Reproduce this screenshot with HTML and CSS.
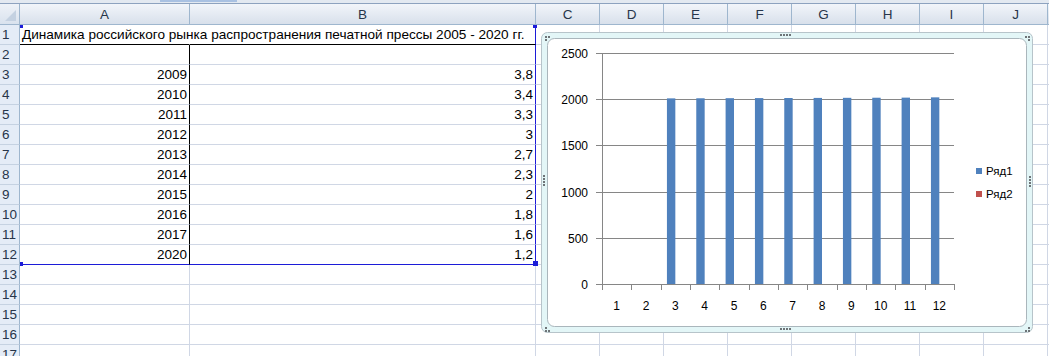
FILE: index.html
```html
<!DOCTYPE html>

<html>
    <head>
        <meta charset="utf-8">
        <title>Книга1 - Microsoft Excel</title>
        <link rel="stylesheet" href="styles.css">
    </head>

    <body>
        <div class="ribbon-edge"><span class="ribbon-tab"></span></div>

        <div class="sheet">
            <div class="grid" id="grid"></div>

            <span class="range-dot dot-tl"></span>
            <span class="range-dot dot-tr"></span>
            <span class="range-dot dot-bl"></span>
            <span class="range-dot dot-br"></span>

            <div class="chart">
                <svg width="493" height="302" viewBox="541 33 493 302" id="chart">
                    <rect class="frame-outer" x="541.5" y="33.5" width="491" height="300" rx="6"></rect>
                    <rect class="frame-inner" x="547.5" y="39.5" width="479" height="288" rx="7"></rect>

                    <g class="handle">
                        <rect x="780" y="35" width="2" height="2"></rect>
                        <rect x="783" y="35" width="2" height="2"></rect>
                        <rect x="786" y="35" width="2" height="2"></rect>
                        <rect x="789" y="35" width="2" height="2"></rect>
                        <rect x="780" y="329" width="2" height="2"></rect>
                        <rect x="783" y="329" width="2" height="2"></rect>
                        <rect x="786" y="329" width="2" height="2"></rect>
                        <rect x="789" y="329" width="2" height="2"></rect>
                        <rect x="543" y="176" width="2" height="2"></rect>
                        <rect x="543" y="179" width="2" height="2"></rect>
                        <rect x="543" y="182" width="2" height="2"></rect>
                        <rect x="543" y="185" width="2" height="2"></rect>
                        <rect x="1029" y="177" width="2" height="2"></rect>
                        <rect x="1029" y="180" width="2" height="2"></rect>
                        <rect x="1029" y="183" width="2" height="2"></rect>
                        <rect x="1029" y="186" width="2" height="2"></rect>
                        <rect x="545" y="37" width="2" height="2"></rect>
                        <rect x="548" y="37" width="2" height="2"></rect>
                        <rect x="545" y="40" width="2" height="2"></rect>
                        <rect x="1025" y="37" width="2" height="2"></rect>
                        <rect x="1028" y="37" width="2" height="2"></rect>
                        <rect x="1028" y="40" width="2" height="2"></rect>
                        <rect x="545" y="328" width="2" height="2"></rect>
                        <rect x="545" y="331" width="2" height="2"></rect>
                        <rect x="548" y="331" width="2" height="2"></rect>
                        <rect x="1028" y="328" width="2" height="2"></rect>
                        <rect x="1025" y="331" width="2" height="2"></rect>
                        <rect x="1028" y="331" width="2" height="2"></rect>
                    </g>

                    <g id="axes"></g>
                    <g id="bars"></g>

                    <rect x="976" y="169" width="6" height="6" fill="#4f81bd"></rect>
                    <text class="legend" x="986" y="176">Ряд1</text>
                    <rect x="976" y="192" width="6" height="6" fill="#c0504d"></rect>
                    <text class="legend" x="986" y="199">Ряд2</text>
                </svg>
            </div>
        </div>

        <script>
            const columns = ["A", "B", "C", "D", "E", "F", "G", "H", "I", "J", ""];
            const rows = [
                ["Динамика российского рынка распространения печатной прессы 2005 - 2020 гг.", ""],
                ["", ""],
                ["2009", "3,8"],
                ["2010", "3,4"],
                ["2011", "3,3"],
                ["2012", "3"],
                ["2013", "2,7"],
                ["2014", "2,3"],
                ["2015", "2"],
                ["2016", "1,8"],
                ["2017", "1,6"],
                ["2020", "1,2"]
            ];

            const grid = document.getElementById("grid");

            function addCell(cls, text) {
                const el = document.createElement("div");
                el.className = cls;
                if (text) el.textContent = text;
                grid.appendChild(el);
                return el;
            }

            addCell("corner");
            columns.forEach(c => addCell("col-head", c));

            for (let r = 1; r <= 17; r++) {
                addCell("row-head", String(r));
                const values = rows[r - 1] || ["", ""];
                for (let c = 0; c < columns.length; c++) {
                    let cls = "cell";
                    let text = "";
                    if (c === 0 && r === 1) {
                        cls += " title under-black";
                        text = values[0];
                    } else if (c === 1 && r === 1) {
                        cls += " under-black blue-right";
                    } else if (c === 0 && r <= 12) {
                        cls += " num black-right";
                        text = values[0];
                    } else if (c === 1 && r <= 12) {
                        cls += " num blue-right";
                        text = values[1];
                    }
                    if (r === 12 && c < 2) cls += " blue-bottom";
                    addCell(cls, text);
                }
            }

            // chart
            const ns = "http://www.w3.org/2000/svg";
            const axes = document.getElementById("axes");
            const bars = document.getElementById("bars");
            const x0 = 602, x1 = 954, y0 = 285, scale = 231 / 2500;
            const step = (x1 - x0) / 12;

            function svgEl(name, attrs, parent, text) {
                const el = document.createElementNS(ns, name);
                for (const k in attrs) el.setAttribute(k, attrs[k]);
                if (text) el.textContent = text;
                parent.appendChild(el);
                return el;
            }

            for (let v = 0; v <= 2500; v += 500) {
                const y = Math.round(y0 - v * scale) + 0.5;
                svgEl("line", { x1: 596, x2: x1, y1: y, y2: y, class: "grid-line" }, axes);
                svgEl("text", { x: 588, y: y + 4, class: "tick", "text-anchor": "end" }, axes, String(v));
            }
            svgEl("line", { x1: x0 + 0.5, x2: x0 + 0.5, y1: 54, y2: y0 + 0.5, class: "grid-line" }, axes);

            for (let i = 0; i <= 12; i++) {
                const x = Math.round(x0 + i * step) + 0.5;
                svgEl("line", { x1: x, x2: x, y1: y0, y2: y0 + 6, class: "grid-line" }, axes);
                if (i < 12) {
                    svgEl("text", { x: x0 + (i + 0.5) * step, y: 311, class: "tick", "text-anchor": "middle" }, axes, String(i + 1));
                }
            }

            rows.forEach((row, i) => {
                const v = parseFloat(row[0]);
                if (!v) return;
                const h = v * scale;
                const cx = x0 + (i + 0.5) * step;
                svgEl("rect", { x: cx - 8.4, y: y0 - h, width: 8.4, height: h, fill: "#4f81bd" }, bars);
            });
        </script>
    </body>
</html>
```

FILE: styles.css
```css
body {
    margin: 0;
    padding: 0;
    overflow: hidden;
    background: #fff;
    font-family: "Liberation Sans", Arial, sans-serif;
}

.ribbon-edge {
    display: flex;
    height: 4px;
    background: #e3e9f1;
    border-bottom: 1px solid #8da2bf;
    box-sizing: border-box;
}

.ribbon-tab {
    margin-left: 160px;
    width: 77px;
    height: 2px;
    background: #a9c1e2;
}

.sheet {
    position: relative;
}

.grid {
    display: grid;
    grid-template-columns: 20px 170px 346px repeat(8, 64px) 1fr;
    grid-template-rows: 21px repeat(17, 20px);
}

.corner,
.col-head,
.row-head,
.cell {
    box-sizing: border-box;
    font-size: 13px;
    white-space: nowrap;
}

.corner {
    position: relative;
    background: linear-gradient(#eef2f8, #d9e2ee);
    border-right: 1px solid #9eb6ce;
    border-bottom: 1px solid #9eb6ce;
}

.corner::after {
    content: "";
    position: absolute;
    right: 3px;
    bottom: 3px;
    border-left: 11px solid transparent;
    border-bottom: 11px solid #c4d1e1;
}

.col-head {
    display: flex;
    align-items: center;
    justify-content: center;
    background: linear-gradient(#f2f5fa, #d8e0eb);
    border-right: 1px solid #9eb6ce;
    border-bottom: 1px solid #9eb6ce;
    color: #27354a;
    padding-top: 1px;
    font-size: 13.5px;
}

.row-head {
    display: flex;
    align-items: center;
    padding-left: 2px;
    background: #e4ecf7;
    border-right: 1px solid #9eb6ce;
    border-bottom: 1px solid #c5d2e2;
    color: #27354a;
    font-size: 13.5px;
}

.cell {
    display: flex;
    align-items: flex-end;
    padding: 0 2px 2px 2px;
    line-height: 15px;
    border-right: 1px solid #d0d7e5;
    border-bottom: 1px solid #d0d7e5;
    color: #000;
    font-size: 13.5px;
}

.num {
    justify-content: flex-end;
}

.title {
    overflow: visible;
    border-right-color: transparent;
    z-index: 1;
    font-size: 13.6px;
}

.under-black {
    border-bottom-color: #000;
}

.black-right {
    border-right-color: #000;
}

.blue-right {
    border-right-color: #1c1cd8;
}

.blue-bottom {
    border-bottom-color: #1c1cd8;
}

.range-dot {
    position: absolute;
    width: 4px;
    height: 4px;
    background: #1c1cd8;
    z-index: 2;
}

.dot-tl { left: 20px; top: 21px; width: 3px; height: 3px; }
.dot-tr { left: 533px; top: 21px; height: 3px; }
.dot-bl { left: 20px; top: 258px; width: 3px; }
.dot-br { left: 533px; top: 257px; width: 5px; height: 5px; }

.chart {
    position: absolute;
    left: 541px;
    top: 28px;
    z-index: 3;
}

.chart svg {
    display: block;
}

.frame-outer {
    fill: #e3f6f7;
    stroke: #b7c4ca;
}

.frame-inner {
    fill: #fff;
    stroke: #aab6bc;
}

.handle rect {
    fill: #6e7478;
}

.grid-line {
    stroke: #868686;
    stroke-width: 1;
}

.tick {
    font-family: "Liberation Sans", Arial, sans-serif;
    font-size: 12px;
    fill: #000;
}

.legend {
    font-family: "Liberation Sans", Arial, sans-serif;
    font-size: 11.5px;
    fill: #000;
}
```
